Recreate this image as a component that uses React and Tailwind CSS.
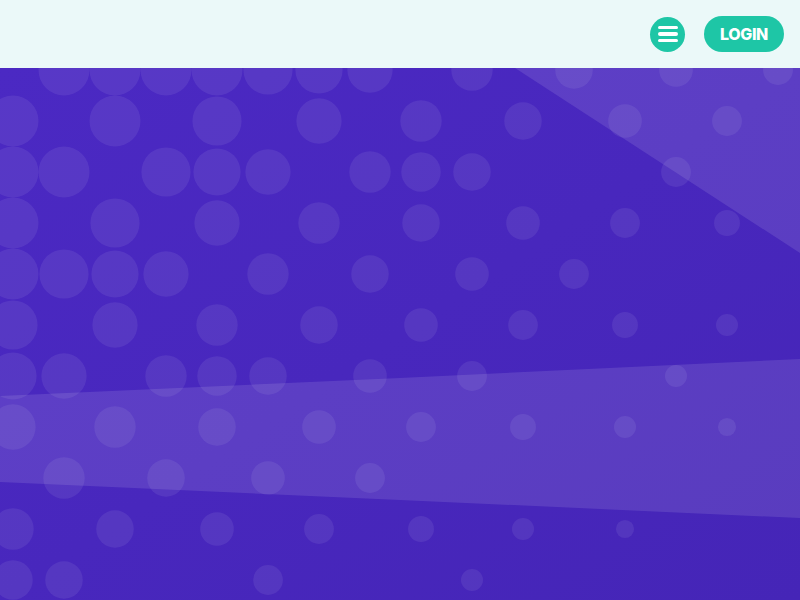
import React from "react";

// dot grid: which columns show up on each row
const ROWS = [
  [1, 2, 3, 4, 5, 6, 7, 9, 11, 13, 15],
  [0, 2, 4, 6, 8, 10, 12, 14],
  [0, 1, 3, 4, 5, 7, 8, 9, 13],
  [0, 2, 4, 6, 8, 10, 12, 14],
  [0, 1, 2, 3, 5, 7, 9, 11],
  [0, 2, 4, 6, 8, 10, 12, 14],
  [0, 1, 3, 4, 5, 7, 9, 13],
  [0, 2, 4, 6, 8, 10, 12, 14],
  [1, 3, 5, 7],
  [0, 2, 4, 6, 8, 10, 12],
  [0, 1, 5, 9],
];

const TOP = 68;

function dots() {
  const out = [];
  ROWS.forEach((cols, ri) => {
    const y = 70 + ri * 51;
    cols.forEach(ci => {
      const x = 13 + ci * 51;
      let r = 31 - 0.019 * x - 0.019 * y;
      r = Math.max(7, Math.min(25.5, r));
      out.push({ x, y: y - TOP, r });
    });
  });
  return out;
}

function Backdrop() {
  const list = dots();
  return (
    <svg className="absolute inset-0 w-full h-full" viewBox="0 0 800 532" preserveAspectRatio="none">
      <defs>
        <linearGradient id="bg" x1="0" y1="0" x2="1" y2="1">
          <stop offset="0%" stopColor="#4b29c3" />
          <stop offset="100%" stopColor="#4525b7" />
        </linearGradient>
      </defs>
      <rect x="0" y="0" width="800" height="532" fill="url(#bg)" />
      {list.map((d, i) => (
        <circle key={i} cx={d.x} cy={d.y} r={d.r} fill="#ffffff" fillOpacity="0.075" />
      ))}
      <polygon points="515,0 800,0 800,185" fill="#ffffff" fillOpacity="0.11" />
      <polygon points="0,328 400,310 800,291 800,450 400,432 0,414" fill="#ffffff" fillOpacity="0.11" />
    </svg>
  );
}

export default function App() {
  return (
    <div className="w-full h-screen flex flex-col overflow-hidden" style={{ fontFamily: "Inter, 'Noto Sans', sans-serif" }}>
      <header className="h-[68px] shrink-0 bg-[#ebf9f9] flex items-center justify-end pr-4">
        <button className="w-[35px] h-[35px] rounded-full bg-[#1ec6a6] flex flex-col items-center justify-center gap-[3px]">
          <span className="block w-[20px] h-[3.5px] rounded-full bg-white" />
          <span className="block w-[20px] h-[3.5px] rounded-full bg-white" />
          <span className="block w-[20px] h-[3.5px] rounded-full bg-white" />
        </button>
        <button className="ml-[19px] w-[80px] h-[36px] rounded-full bg-[#1ec6a6] text-white text-[16px] font-extrabold tracking-tight flex items-center justify-center">
          LOGIN
        </button>
      </header>
      <main className="relative flex-1 overflow-hidden">
        <Backdrop />
      </main>
    </div>
  );
}
